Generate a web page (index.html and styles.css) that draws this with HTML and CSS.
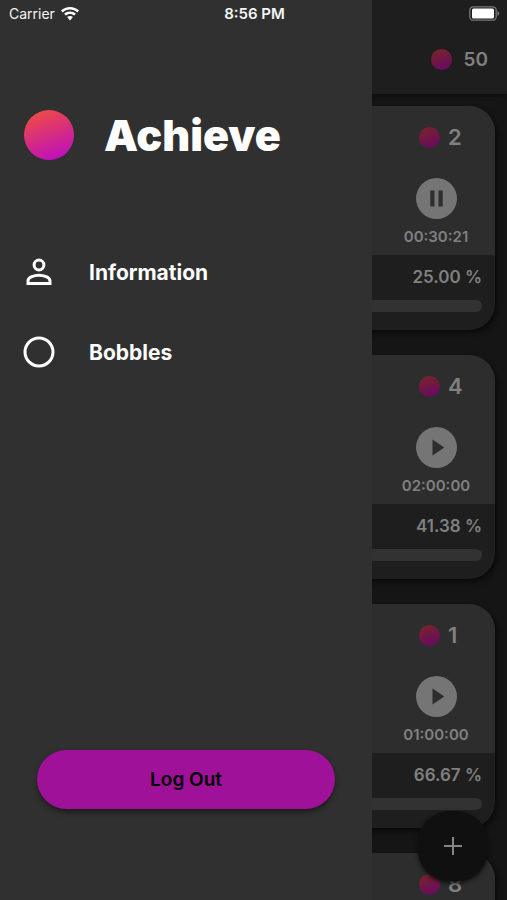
FILE: index.html
```html
<!DOCTYPE html>
<html lang="en">
<head>
<meta charset="utf-8">
<meta name="viewport" content="width=device-width, initial-scale=1">
<title>Achieve</title>
<link rel="stylesheet" href="styles.css">
</head>
<body>
<div class="screen">
  <header class="appbar">
    <span class="coin"></span>
    <span class="balance">50</span>
  </header>

  <main class="list">
    <article class="card">
      <div class="card-top">
        <div class="reward"><span class="coin"></span><span>2</span></div>
        <button class="round" type="button" aria-label="Pause">
          <svg viewBox="0 0 41 41"><circle cx="20.500" cy="20.500" r="20.500" fill="#757575"/><path d="M14.300 12.500h4.200v16h-4.200zM22.500 12.500h4.200v16h-4.200z" fill="#2e2e2e"/></svg>
        </button>
        <time class="timer">00:30:21</time>
      </div>
      <div class="card-bottom">
        <span class="percent">25.00 %</span>
        <div class="track"></div>
      </div>
    </article>

    <article class="card">
      <div class="card-top">
        <div class="reward"><span class="coin"></span><span>4</span></div>
        <button class="round" type="button" aria-label="Start">
          <svg viewBox="0 0 41 41"><circle cx="20.500" cy="20.500" r="20.500" fill="#757575"/><path d="M16.500 12.500v16l11.800-8z" fill="#2e2e2e"/></svg>
        </button>
        <time class="timer">02:00:00</time>
      </div>
      <div class="card-bottom">
        <span class="percent">41.38 %</span>
        <div class="track"></div>
      </div>
    </article>

    <article class="card">
      <div class="card-top">
        <div class="reward"><span class="coin"></span><span>1</span></div>
        <button class="round" type="button" aria-label="Start">
          <svg viewBox="0 0 41 41"><circle cx="20.500" cy="20.500" r="20.500" fill="#757575"/><path d="M16.500 12.500v16l11.800-8z" fill="#2e2e2e"/></svg>
        </button>
        <time class="timer">01:00:00</time>
      </div>
      <div class="card-bottom">
        <span class="percent">66.67 %</span>
        <div class="track"></div>
      </div>
    </article>

    <article class="card">
      <div class="card-top">
        <div class="reward"><span class="coin"></span><span>8</span></div>
      </div>
    </article>
  </main>

  <button class="fab" type="button" aria-label="Add">
    <svg viewBox="0 0 18 18"><path d="M9 0v18M0 9h18" stroke="#858585" stroke-width="2"/></svg>
  </button>

  <aside class="drawer">
    <div class="brand">
      <span class="logo"></span>
      <h1>Achieve</h1>
    </div>
    <nav class="menu">
      <a href="#information">
        <svg viewBox="0 0 38 38" fill="none" stroke="#fff" stroke-width="3"><circle cx="19" cy="12" r="4.900"/><path d="M8 30.500v-2.500c0-3.800 6.500-5.700 11-5.700s11 1.900 11 5.700v2.500z"/></svg>
        <span>Information</span>
      </a>
      <a href="#bobbles">
        <svg viewBox="0 0 38 38" fill="none" stroke="#fff" stroke-width="3"><circle cx="19" cy="19" r="14"/></svg>
        <span>Bobbles</span>
      </a>
    </nav>
    <button class="logout" type="button">Log Out</button>
  </aside>

  <div class="status">
    <div class="carrier">
      <span>Carrier</span>
      <svg viewBox="0 0 18 14" fill="#fff"><path d="M9 0C5.500 0 2.400 1.300 0 3.500l1.800 1.900C3.700 3.600 6.200 2.600 9 2.600s5.300 1 7.200 2.800L18 3.500C15.600 1.300 12.500 0 9 0z"/><path d="M9 4.500c-2.300 0-4.300.9-5.900 2.300L4.900 8.600C6 7.600 7.400 7 9 7s3 .6 4.100 1.600l1.800-1.800C13.300 5.400 11.300 4.500 9 4.500z"/><path d="M9 9c-1.100 0-2.100.4-2.900 1.100L9 13.500l2.900-3.400C11.100 9.400 10.100 9 9 9z"/></svg>
    </div>
    <time class="clock">8:56 PM</time>
    <svg class="battery" viewBox="0 0 31 15"><rect x=".8" y=".8" width="26.400" height="13.400" rx="3.500" fill="none" stroke="#777" stroke-width="1.300"/><rect x="3" y="2.500" width="22" height="10" rx="1.500" fill="#fff"/><path d="M28.500 5v5c1-.4 1.800-1.300 1.800-2.500S29.500 5.400 28.500 5z" fill="#777"/></svg>
  </div>
</div>
</body>
</html>
```
FILE: styles.css
```css
* {
  box-sizing: border-box;
}

body {
  margin: 0;
  background: #151515;
  font-family: Inter, Roboto, "Liberation Sans", sans-serif;
}

button {
  border: 0;
  padding: 0;
  font: inherit;
  cursor: pointer;
}

svg {
  display: block;
}

.screen {
  position: relative;
  height: 100vh;
  overflow: hidden;
  color: #808080;
}

.appbar {
  display: flex;
  align-items: center;
  justify-content: flex-end;
  gap: 12px;
  padding: 25px 19px 0;
  height: 94px;
  background: #1e1e1e;
  box-shadow: 0 1px 4px #0c0c0c;
}

.coin {
  width: 21px;
  height: 21px;
  border-radius: 50%;
  background: linear-gradient(160deg, #7b2526, #650866);
}

.balance {
  font-size: 19px;
  font-weight: 600;
}

.list {
  display: flex;
  flex-direction: column;
  gap: 25px;
  padding: 12px;
}

.card {
  flex: none;
  border-radius: 26px;
  background: #1e1e1e;
  box-shadow: 2px 3px 5px #0a0a0a;
  overflow: hidden;
}

.card-top {
  display: flex;
  flex-direction: column;
  align-items: flex-end;
  height: 149px;
  padding: 17px 24px 0 0;
  background: #2d2d2d;
}

.reward {
  display: flex;
  align-items: center;
  gap: 8px;
  width: 52px;
  height: 28px;
  font-size: 22px;
  font-weight: 600;
}

.round {
  width: 41px;
  height: 41px;
  margin: 27px 14px 0 0;
  background: none;
}

.timer {
  display: flex;
  justify-content: center;
  width: 70px;
  margin-top: 8px;
  font-size: 15px;
  font-weight: 600;
  line-height: 20px;
}

.card-bottom {
  padding: 10px 13px 18px;
}

.percent {
  display: block;
  font-size: 17px;
  font-weight: 600;
  line-height: 25px;
  text-align: right;
}

.track {
  height: 12px;
  margin-top: 10px;
  border-radius: 6px;
  background: #323232;
}

.fab {
  position: absolute;
  right: 19px;
  bottom: 19px;
  display: grid;
  place-items: center;
  width: 70px;
  height: 70px;
  border-radius: 32px;
  background: #101010;
  box-shadow: 0 2px 4px #0c0c0c;
}

.fab svg {
  width: 18px;
  height: 18px;
}

.drawer {
  position: absolute;
  top: 0;
  bottom: 0;
  left: 0;
  display: flex;
  flex-direction: column;
  width: 73.4%;
  padding: 104px 37px 91px;
  background: #303030;
  color: #fff;
}

.brand {
  display: flex;
  align-items: center;
  gap: 30px;
  height: 62px;
  margin-left: -13px;
}

.logo {
  width: 50px;
  height: 50px;
  border-radius: 50%;
  background: linear-gradient(160deg, #f04e3e 5%, #bc0cc4 95%);
}

h1 {
  margin: 0;
  font-size: 43px;
  font-weight: 900;
  line-height: 60px;
}

.menu {
  display: flex;
  flex-direction: column;
  gap: 42px;
  margin: 87px 0 auto -17px;
}

.menu a {
  display: flex;
  align-items: center;
  gap: 31px;
  color: inherit;
  font-size: 21px;
  font-weight: 700;
  text-decoration: none;
}

.menu svg {
  width: 38px;
  height: 38px;
}

.logout {
  height: 59px;
  border-radius: 30px;
  background: #9e1198;
  box-shadow: 0 3px 5px #1c1c1c;
  color: #000;
  font-size: 19px;
  font-weight: 600;
}

.status {
  position: absolute;
  top: 0;
  left: 0;
  right: 0;
  display: grid;
  grid-template-columns: 1fr auto 1fr;
  align-items: center;
  height: 27px;
  padding: 0 7px 0 9px;
  color: #f5f5f5;
  font-size: 14px;
}

.carrier {
  display: flex;
  align-items: center;
  gap: 6px;
}

.carrier svg {
  width: 18px;
  height: 14px;
}

.clock {
  font-size: 15px;
  font-weight: 600;
}

.battery {
  width: 31px;
  height: 15px;
  justify-self: end;
}
```
